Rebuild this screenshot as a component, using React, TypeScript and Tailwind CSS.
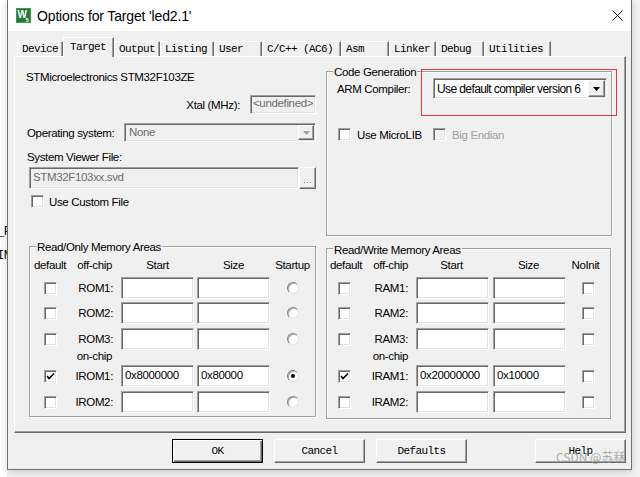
import React from "react";

const sunken =
  "border border-t-[#a0a0a0] border-l-[#a0a0a0] border-r-white border-b-white shadow-[inset_1px_1px_0_#696969,inset_-1px_-1px_0_#e3e3e3]";
const raised =
  "border border-t-white border-l-white border-r-[#696969] border-b-[#696969] shadow-[inset_-1px_-1px_0_#a0a0a0]";
const mono = "font-['Liberation_Mono',monospace] text-[11px] tracking-[-0.6px]";

function Checkbox({ checked = false, disabled = false }: { checked?: boolean; disabled?: boolean }) {
  return (
    <div className={`w-[13px] h-[13px] shrink-0 ${sunken} ${disabled ? "bg-[#f0f0f0]" : "bg-white"} flex items-center justify-center`}>
      {checked && (
        <svg width="9" height="9" viewBox="0 0 9 9">
          <path d="M1 4 L3 6.5 L8 1.5" stroke="#000" strokeWidth="1.6" fill="none" />
        </svg>
      )}
    </div>
  );
}

function Radio({ checked = false }: { checked?: boolean }) {
  return (
    <div className="w-[12px] h-[12px] rounded-full border border-t-[#808080] border-l-[#808080] border-r-[#e3e3e3] border-b-[#e3e3e3] bg-white shadow-[inset_1px_1px_0_#b0b0b0] flex items-center justify-center">
      {checked && <div className="w-[4px] h-[4px] rounded-full bg-black" />}
    </div>
  );
}

function Field({ value = "", className = "" }: { value?: string; className?: string }) {
  return (
    <div className={`h-[22px] bg-white ${sunken} pl-[3px] pt-[2px] leading-[14px] whitespace-nowrap overflow-hidden ${className}`}>
      {value}
    </div>
  );
}

function GroupBox({
  title,
  className = "",
  labelTop = "-top-[7px]",
  children,
}: {
  title: string;
  className?: string;
  labelTop?: string;
  children?: React.ReactNode;
}) {
  return (
    <div className={`relative border border-[#a0a0a0] shadow-[inset_1px_1px_0_white,1px_1px_0_white] ${className}`}>
      <div className={`absolute left-[6px] ${labelTop} px-[1px] bg-[#f0f0f0] leading-[14px] whitespace-nowrap`}>{title}</div>
      {children}
    </div>
  );
}

type Row = { label: string; checked?: boolean; start?: string; size?: string; sel?: boolean };

function ROTable() {
  const rows1: Row[] = [{ label: "ROM1:" }, { label: "ROM2:" }, { label: "ROM3:" }];
  const rows2: Row[] = [
    { label: "IROM1:", checked: true, start: "0x8000000", size: "0x80000", sel: true },
    { label: "IROM2:" },
  ];
  const mt1 = ["mt-[5px]", "mt-[3px]", "mt-[4px]"];
  const mt2 = ["mt-[3px]", "mt-[4px]"];
  const row = (r: Row, mt: string) => (
    <div key={r.label} className={`flex items-center h-[22px] ${mt}`}>
      <div className="w-[38px] flex justify-center">
        <Checkbox checked={r.checked} />
      </div>
      <div className="w-[52px] text-right pr-[8px] whitespace-nowrap">{r.label}</div>
      <div className="w-[76px]">
        <Field className="w-[73px]" value={r.start} />
      </div>
      <div className="w-[73px]">
        <Field className="w-[73px]" value={r.size} />
      </div>
      <div className="flex-1 flex justify-center">
        <Radio checked={r.sel} />
      </div>
    </div>
  );
  return (
    <div className="pt-[11px] pl-[1px]">
      <div className="flex h-[14px] items-center whitespace-nowrap">
        <div className="w-[38px] flex justify-center">default</div>
        <div className="w-[52px] text-right pr-[9px]">off-chip</div>
        <div className="w-[76px]">
          <div className="w-[73px] text-center">Start</div>
        </div>
        <div className="w-[73px] text-center">Size</div>
        <div className="flex-1 flex justify-center">Startup</div>
      </div>
      {rows1.map((r, i) => row(r, mt1[i]))}
      <div className="h-[12px] leading-[12px] flex">
        <div className="w-[38px]" />
        <div className="w-[52px] text-right pr-[9px]">on-chip</div>
      </div>
      {rows2.map((r, i) => row(r, mt2[i]))}
    </div>
  );
}

function RWTable() {
  const rows1: Row[] = [{ label: "RAM1:" }, { label: "RAM2:" }, { label: "RAM3:" }];
  const rows2: Row[] = [
    { label: "IRAM1:", checked: true, start: "0x20000000", size: "0x10000" },
    { label: "IRAM2:" },
  ];
  const mt1 = ["mt-[5px]", "mt-[3px]", "mt-[4px]"];
  const mt2 = ["mt-[3px]", "mt-[4px]"];
  const row = (r: Row, mt: string) => (
    <div key={r.label} className={`flex items-center h-[22px] ${mt}`}>
      <div className="w-[32px] flex justify-center">
        <Checkbox checked={r.checked} />
      </div>
      <div className="w-[56px] text-right pr-[8px] whitespace-nowrap">{r.label}</div>
      <div className="w-[77px]">
        <Field className="w-[73px]" value={r.start} />
      </div>
      <div className="w-[73px]">
        <Field className="w-[73px]" value={r.size} />
      </div>
      <div className="flex-1 flex justify-center">
        <Checkbox />
      </div>
    </div>
  );
  return (
    <div className="pt-[9px] pl-[1px]">
      <div className="flex h-[14px] items-center whitespace-nowrap">
        <div className="w-[38px] flex justify-center -ml-[1px]">default</div>
        <div className="w-[50px] text-right pr-[7px]">off-chip</div>
        <div className="w-[77px]">
          <div className="w-[73px] text-center">Start</div>
        </div>
        <div className="w-[73px] text-center">Size</div>
        <div className="flex-1 flex justify-center pr-[4px]">NoInit</div>
      </div>
      {rows1.map((r, i) => row(r, mt1[i]))}
      <div className="h-[12px] leading-[12px] flex">
        <div className="w-[32px]" />
        <div className="w-[56px] text-right pr-[8px]">on-chip</div>
      </div>
      {rows2.map((r, i) => row(r, mt2[i]))}
    </div>
  );
}

const tabs: { name: string; w: string }[] = [
  { name: "Device", w: "w-[46px]" },
  { name: "Target", w: "w-[51px]" },
  { name: "Output", w: "w-[46px]" },
  { name: "Listing", w: "w-[54px]" },
  { name: "User", w: "w-[48px]" },
  { name: "C/C++ (AC6)", w: "w-[79px]" },
  { name: "Asm", w: "w-[48px]" },
  { name: "Linker", w: "w-[47px]" },
  { name: "Debug", w: "w-[48px]" },
  { name: "Utilities", w: "w-[67px]" },
];

function Button({ label, def = false, className = "" }: { label: string; def?: boolean; className?: string }) {
  return (
    <div
      className={`w-[91px] h-[24px] flex items-center justify-center bg-[#f0f0f0] ${mono} ${
        def
          ? "border border-black shadow-[inset_1px_1px_0_white,inset_-1px_-1px_0_#696969,inset_-2px_-2px_0_#a0a0a0]"
          : raised
      } ${className}`}
    >
      {label}
    </div>
  );
}

function DownArrow({ color }: { color: string }) {
  return (
    <svg width="7" height="4" viewBox="0 0 7 4">
      <path d="M0 0 H7 L3.5 4 Z" fill={color} />
    </svg>
  );
}

export default function App() {
  return (
    <div className="relative w-[640px] h-[477px] overflow-hidden bg-[#f3f3f3] font-['Liberation_Sans',Arial,sans-serif] text-[11.5px] leading-[14px] tracking-[-0.35px] text-black">
      {/* desktop behind */}
      <div className="absolute left-0 top-0 w-[7px] h-[477px] bg-white" />
      <div className="absolute left-[-3px] top-[225px] font-['Liberation_Mono',monospace] text-[12px] leading-[14px]">_F</div>
      <div className="absolute left-[-3px] top-[249px] font-['Liberation_Mono',monospace] text-[12px] leading-[14px]">IN</div>

      {/* window */}
      <div className="absolute left-[7px] top-0 w-[625px] h-[470px] border-x border-b border-[#707070] bg-[#f0f0f0] shadow-[0_2px_8px_rgba(0,0,0,0.18)] flex flex-col">
        {/* title bar */}
        <div className="h-[31px] shrink-0 bg-white flex items-center">
          <svg className="ml-[8px]" width="15" height="15" viewBox="0 0 15 15">
            <rect x="0" y="0" width="15" height="15" fill="#227a35" />
            <rect x="0.5" y="0.5" width="14" height="14" fill="none" stroke="#3d9a50" />
            <text x="1.5" y="10" fontSize="10" fontWeight="bold" fill="#fff" fontFamily="Liberation Sans, sans-serif">W</text>
            <text x="9.5" y="13.5" fontSize="6" fontWeight="bold" fill="#fff" fontFamily="Liberation Sans, sans-serif">5</text>
          </svg>
          <span className="ml-[6px] text-[14px] tracking-[-0.15px] leading-[18px]">Options for Target 'led2.1'</span>
          <svg className="ml-auto mr-[8px]" width="11" height="11" viewBox="0 0 11 11">
            <path d="M0.5 0.5 L10.5 10.5 M10.5 0.5 L0.5 10.5" stroke="#111" strokeWidth="1" />
          </svg>
        </div>

        {/* tab strip */}
        <div className="mt-[6px] ml-[9px] h-[19px] flex items-end">
          {tabs.map((t) =>
            t.name === "Target" ? (
              <div
                key={t.name}
                className={`${t.w} relative z-10 h-[20px] -mb-[1px] bg-[#f0f0f0] border-t border-l border-r border-t-white border-l-white border-r-[#696969] shadow-[inset_-1px_0_0_#a0a0a0] pl-[6px] pt-[2px] ${mono} leading-[14px] whitespace-nowrap`}
              >
                {t.name}
              </div>
            ) : (
              <div
                key={t.name}
                className={`${t.w} h-[15px] border-t border-l border-r border-t-white border-l-white border-r-[#696969] shadow-[inset_-1px_0_0_#a0a0a0] pl-[4px] ${mono} leading-[14px] whitespace-nowrap overflow-hidden`}
              >
                {t.name}
              </div>
            )
          )}
        </div>

        {/* panel */}
        <div className={`ml-[6px] w-[612px] h-[377px] ${raised} flex pl-[11px]`}>
          {/* left column */}
          <div className="w-[290px] flex flex-col">
            <div className="mt-[13px] h-[14px] whitespace-nowrap">STMicroelectronics STM32F103ZE</div>
            <div className="mt-[11px] h-[19px] flex items-center justify-end">
              <span>Xtal (MHz):</span>
              <div className={`ml-[10px] w-[66px] h-[19px] ${sunken} bg-[#f0f0f0] text-[#6d6d6d] pl-[2px] leading-[15px] whitespace-nowrap overflow-hidden`}>
                &lt;undefined&gt;
              </div>
            </div>
            <div className="mt-[9px] h-[19px] flex items-center">
              <div className="w-[98px] pl-[1px] whitespace-nowrap">Operating system:</div>
              <div className={`flex-1 h-[19px] ${sunken} bg-[#f0f0f0] flex items-center`}>
                <span className="pl-[4px] text-[#6d6d6d] leading-[15px]">None</span>
                <div className={`ml-auto mr-[1px] w-[16px] h-[15px] ${raised} bg-[#f0f0f0] flex items-center justify-center`}>
                  <DownArrow color="#a0a0a0" />
                </div>
              </div>
            </div>
            <div className="mt-[8px] h-[14px] pl-[1px] whitespace-nowrap">System Viewer File:</div>
            <div className="mt-[3px] h-[22px] flex pl-[3px]">
              <div className={`w-[270px] h-[22px] ${sunken} bg-[#f0f0f0] text-[#6d6d6d] pl-[3px] pt-[2px] leading-[15px]`}>
                STM32F103xx.svd
              </div>
              <div className={`w-[17px] h-[22px] ${raised} bg-[#f0f0f0] flex items-end justify-center gap-[2px] pb-[5px]`}>
                <div className="w-[1px] h-[1px] bg-[#909090]" />
                <div className="w-[1px] h-[1px] bg-[#909090]" />
                <div className="w-[1px] h-[1px] bg-[#909090]" />
              </div>
            </div>
            <div className="mt-[6px] h-[13px] flex items-center pl-[5px]">
              <Checkbox />
              <span className="ml-[5px] whitespace-nowrap">Use Custom File</span>
            </div>
            <GroupBox title="Read/Only Memory Areas" className="mt-[38px] ml-[3px] w-[287px] h-[171px]">
              <ROTable />
            </GroupBox>
          </div>

          {/* right column */}
          <div className="ml-[10px] w-[286px] flex flex-col">
            <GroupBox title="Code Generation" className="mt-[14px] w-[286px] h-[165px]">
              <div className="pt-[6px] pl-[10px] flex items-center h-[27px]">
                <div className="w-[96px] whitespace-nowrap">ARM Compiler:</div>
                <div className={`w-[174px] h-[21px] ${sunken} bg-white flex items-center`}>
                  <span className="pl-[3px] text-[12px] tracking-[-0.6px] whitespace-nowrap">Use default compiler version 6</span>
                  <div className={`ml-auto mr-[1px] w-[17px] h-[17px] ${raised} bg-[#f0f0f0] flex items-center justify-center`}>
                    <DownArrow color="#000" />
                  </div>
                </div>
              </div>
              <div className="mt-[29px] pl-[11px] h-[13px] flex items-center">
                <Checkbox />
                <span className="ml-[6px] w-[76px] whitespace-nowrap">Use MicroLIB</span>
                <Checkbox disabled />
                <span className="ml-[6px] whitespace-nowrap text-[#a0a0a0]">Big Endian</span>
              </div>
            </GroupBox>
            <GroupBox title="Read/Write Memory Areas" labelTop="-top-[6px]" className="mt-[12px] w-[285px] h-[171px]">
              <RWTable />
            </GroupBox>
          </div>
        </div>

        {/* buttons */}
        <div className="mt-[6px] ml-[164px] flex">
          <Button label="OK" def />
          <Button label="Cancel" className="ml-[11px]" />
          <Button label="Defaults" className="ml-[11px]" />
          <Button label="Help" className="ml-[68px]" />
        </div>
      </div>

      {/* red annotation */}
      <div className="absolute left-[421px] top-[69px] w-[196px] h-[47px] border border-[#e53935]" />

      {/* watermark */}
      <div className="absolute left-[556px] top-[450px] text-[12px] leading-[14px] tracking-normal text-[#9a9a9a] font-['Noto_Sans_CJK_SC',sans-serif] opacity-80 whitespace-nowrap">
        CSDN @苏秝
      </div>
    </div>
  );
}
